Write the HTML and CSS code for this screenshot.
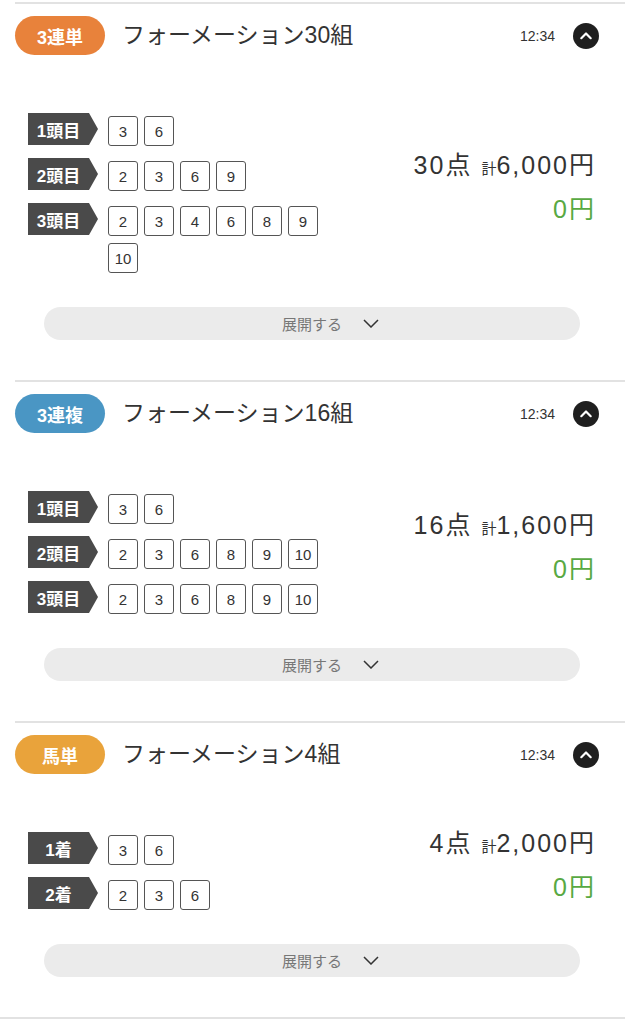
FILE: index.html
```html
<!DOCTYPE html>
<html lang="ja">
<head>
<meta charset="utf-8">
<title>フォーメーション</title>
<link rel="stylesheet" href="styles.css">
</head>
<body>
<main class="list">
  <section class="bet">
    <header class="bet-head">
      <span class="badge badge-orange">3連単</span>
      <h2 class="title">フォーメーション30組</h2>
      <span class="time">12:34</span>
      <button class="toggle" aria-label="閉じる"><svg viewBox="0 0 26 26" width="26" height="26"><circle cx="13" cy="13" r="13" fill="#1f1f1f"/><path d="M8.3 15.2 L13 10.5 L17.7 15.2" fill="none" stroke="#fff" stroke-width="2.2" stroke-linecap="round" stroke-linejoin="round"/></svg></button>
    </header>
    <div class="bet-body">
      <div class="rows">
        <div class="row"><span class="pos">1頭目</span><ul class="nums"><li>3</li><li>6</li></ul></div>
        <div class="row"><span class="pos">2頭目</span><ul class="nums"><li>2</li><li>3</li><li>6</li><li>9</li></ul></div>
        <div class="row"><span class="pos">3頭目</span><ul class="nums"><li>2</li><li>3</li><li>4</li><li>6</li><li>8</li><li>9</li><li>10</li></ul></div>
      </div>
      <div class="price">
        <div class="price-main"><span class="pts">30点</span><span class="sum"><small>計</small>6,000円</span></div>
        <div class="payout">0円</div>
      </div>
    </div>
    <button class="expand"><span>展開する</span><svg viewBox="0 0 16 9" width="16" height="9"><path d="M1 1 L8 8 L15 1" fill="none" stroke="#333" stroke-width="1.5"/></svg></button>
  </section>

  <section class="bet">
    <header class="bet-head">
      <span class="badge badge-blue">3連複</span>
      <h2 class="title">フォーメーション16組</h2>
      <span class="time">12:34</span>
      <button class="toggle" aria-label="閉じる"><svg viewBox="0 0 26 26" width="26" height="26"><circle cx="13" cy="13" r="13" fill="#1f1f1f"/><path d="M8.3 15.2 L13 10.5 L17.7 15.2" fill="none" stroke="#fff" stroke-width="2.2" stroke-linecap="round" stroke-linejoin="round"/></svg></button>
    </header>
    <div class="bet-body">
      <div class="rows">
        <div class="row"><span class="pos">1頭目</span><ul class="nums"><li>3</li><li>6</li></ul></div>
        <div class="row"><span class="pos">2頭目</span><ul class="nums"><li>2</li><li>3</li><li>6</li><li>8</li><li>9</li><li>10</li></ul></div>
        <div class="row"><span class="pos">3頭目</span><ul class="nums"><li>2</li><li>3</li><li>6</li><li>8</li><li>9</li><li>10</li></ul></div>
      </div>
      <div class="price">
        <div class="price-main"><span class="pts">16点</span><span class="sum"><small>計</small>1,600円</span></div>
        <div class="payout">0円</div>
      </div>
    </div>
    <button class="expand"><span>展開する</span><svg viewBox="0 0 16 9" width="16" height="9"><path d="M1 1 L8 8 L15 1" fill="none" stroke="#333" stroke-width="1.5"/></svg></button>
  </section>

  <section class="bet">
    <header class="bet-head">
      <span class="badge badge-yellow">馬単</span>
      <h2 class="title">フォーメーション4組</h2>
      <span class="time">12:34</span>
      <button class="toggle" aria-label="閉じる"><svg viewBox="0 0 26 26" width="26" height="26"><circle cx="13" cy="13" r="13" fill="#1f1f1f"/><path d="M8.3 15.2 L13 10.5 L17.7 15.2" fill="none" stroke="#fff" stroke-width="2.2" stroke-linecap="round" stroke-linejoin="round"/></svg></button>
    </header>
    <div class="bet-body">
      <div class="rows">
        <div class="row"><span class="pos">1着</span><ul class="nums"><li>3</li><li>6</li></ul></div>
        <div class="row"><span class="pos">2着</span><ul class="nums"><li>2</li><li>3</li><li>6</li></ul></div>
      </div>
      <div class="price">
        <div class="price-main"><span class="pts">4点</span><span class="sum"><small>計</small>2,000円</span></div>
        <div class="payout">0円</div>
      </div>
    </div>
    <button class="expand"><span>展開する</span><svg viewBox="0 0 16 9" width="16" height="9"><path d="M1 1 L8 8 L15 1" fill="none" stroke="#333" stroke-width="1.5"/></svg></button>
  </section>
  <div class="list-end"></div>
</main>
</body>
</html>
```

FILE: styles.css
```css
* { box-sizing: border-box; }

body {
  margin: 0;
  background: #fff;
  color: #333;
  font-family: "Liberation Sans", "Noto Sans CJK JP", sans-serif;
}

.list {
  padding-top: 2px;
}

.bet {
  display: flex;
  flex-direction: column;
  margin-left: 15px;
  border-top: 2px solid #e2e2e2;
  padding: 12px 0 40px;
}

.bet-head {
  display: flex;
  align-items: center;
  height: 39px;
  padding-right: 26px;
}

.badge {
  flex: none;
  width: 90px;
  height: 39px;
  border-radius: 20px;
  display: flex;
  align-items: center;
  justify-content: center;
  color: #fff;
  font-size: 18px;
  font-weight: bold;
}
.badge-orange { background: #e8823b; }
.badge-blue { background: #4a96c4; }
.badge-yellow { background: #e9a33b; }

.title {
  flex: 1;
  margin: 0 0 0 17px;
  font-size: 23px;
  font-weight: normal;
  line-height: 1;
  color: #333;
}

.time {
  font-size: 14px;
  margin-right: 18px;
  color: #333;
}

.toggle {
  width: 26px;
  height: 26px;
  padding: 0;
  border: 0;
  background: transparent;
  display: flex;
}

.bet-body {
  display: flex;
  align-items: center;
  margin-top: 58px;
  padding: 0 31px 0 13px;
}

.rows {
  flex: 1;
  display: flex;
  flex-direction: column;
  gap: 12px;
}

.row {
  display: flex;
  align-items: flex-start;
  gap: 10px;
}

.pos {
  flex: none;
  width: 70px;
  height: 32px;
  padding-right: 9px;
  background: #4a4a4a;
  color: #fff;
  font-size: 17px;
  font-weight: bold;
  display: flex;
  align-items: center;
  justify-content: center;
  clip-path: polygon(0 0, calc(100% - 9px) 0, 100% 50%, calc(100% - 9px) 100%, 0 100%);
}

.nums {
  list-style: none;
  margin: 0;
  padding: 3px 0 0;
  width: 212px;
  display: flex;
  flex-wrap: wrap;
  gap: 7px 6px;
}

.nums li {
  width: 30px;
  height: 30px;
  border: 1px solid #555;
  border-radius: 3px;
  display: flex;
  align-items: center;
  justify-content: center;
  font-size: 15px;
  color: #333;
}

.price {
  margin-top: -12px;
  text-align: right;
  margin-right: -2px;
}

.price-main {
  display: flex;
  justify-content: flex-end;
  align-items: baseline;
  gap: 9px;
  font-size: 25px;
  line-height: 28px;
  letter-spacing: 2px;
}

.sum small {
  font-size: 15px;
  letter-spacing: 0;
}

.payout {
  margin-top: 12px;
  font-size: 25px;
  line-height: 28px;
  letter-spacing: 2px;
  color: #58a943;
}

.expand {
  display: flex;
  align-items: center;
  justify-content: center;
  gap: 21px;
  height: 33px;
  margin: 34px 45px 0 29px;
  padding: 0 0 0 37px;
  border: 0;
  border-radius: 17px;
  background: #ebebeb;
  color: #777;
  font-family: "Noto Sans CJK JP", sans-serif;
  font-size: 15px;
}

.list-end {
  border-top: 2px solid #e2e2e2;
}
```
